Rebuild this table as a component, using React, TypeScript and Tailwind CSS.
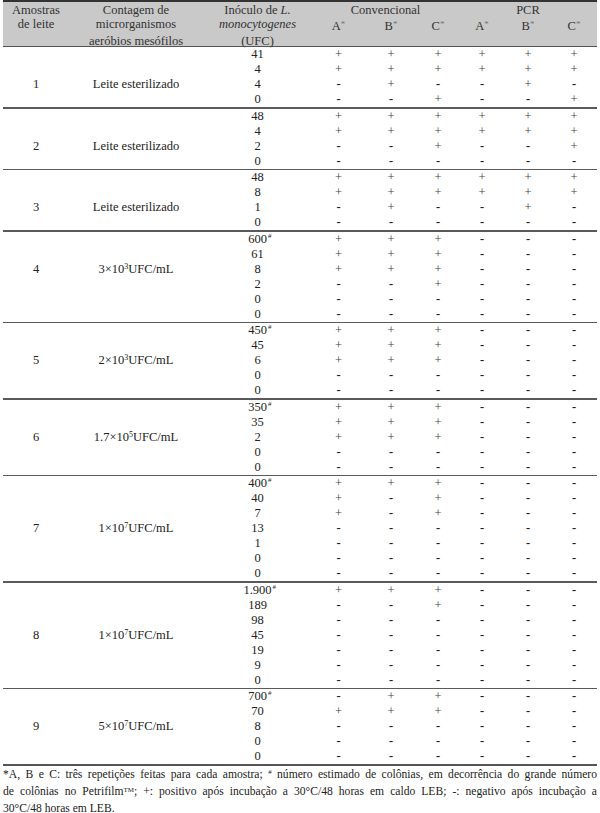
import React from 'react';

// grade de colunas: amostra | contagem | inóculo | convencional A B C | PCR A B C
const cols = 'grid grid-cols-[66px_134px_109px_53px_52px_42px_46px_46px_46px]';

type Row = [string, boolean, string];

interface Group {
    id: string;
    count: React.ReactNode;
    labelRow: number;
    rows: Row[];
}

const Pow = ({ base, exp }: { base: string; exp: string }) => (
    <span>
        {base}×10<span className="relative -top-[4px] text-[8px]">{exp}</span>UFC/mL
    </span>
);

const groups: Group[] = [
    {
        id: '1',
        count: 'Leite esterilizado',
        labelRow: 2,
        rows: [
            ['41', false, '++++++'],
            ['4', false, '++++++'],
            ['4', false, '-+--+-'],
            ['0', false, '--+--+'],
        ],
    },
    {
        id: '2',
        count: 'Leite esterilizado',
        labelRow: 2,
        rows: [
            ['48', false, '++++++'],
            ['4', false, '++++++'],
            ['2', false, '--+--+'],
            ['0', false, '------'],
        ],
    },
    {
        id: '3',
        count: 'Leite esterilizado',
        labelRow: 2,
        rows: [
            ['48', false, '++++++'],
            ['8', false, '++++++'],
            ['1', false, '-+--+-'],
            ['0', false, '------'],
        ],
    },
    {
        id: '4',
        count: <Pow base="3" exp="3" />,
        labelRow: 2,
        rows: [
            ['600', true, '+++---'],
            ['61', false, '+++---'],
            ['8', false, '+++---'],
            ['2', false, '--+---'],
            ['0', false, '------'],
            ['0', false, '------'],
        ],
    },
    {
        id: '5',
        count: <Pow base="2" exp="3" />,
        labelRow: 2,
        rows: [
            ['450', true, '+++---'],
            ['45', false, '+++---'],
            ['6', false, '+++---'],
            ['0', false, '------'],
            ['0', false, '------'],
        ],
    },
    {
        id: '6',
        count: <Pow base="1.7" exp="5" />,
        labelRow: 2,
        rows: [
            ['350', true, '+++---'],
            ['35', false, '+++---'],
            ['2', false, '+++---'],
            ['0', false, '------'],
            ['0', false, '------'],
        ],
    },
    {
        id: '7',
        count: <Pow base="1" exp="7" />,
        labelRow: 3,
        rows: [
            ['400', true, '+++---'],
            ['40', false, '+-+---'],
            ['7', false, '+-+---'],
            ['13', false, '------'],
            ['1', false, '------'],
            ['0', false, '------'],
            ['0', false, '------'],
        ],
    },
    {
        id: '8',
        count: <Pow base="1" exp="7" />,
        labelRow: 3,
        rows: [
            ['1.900', true, '+++---'],
            ['189', false, '--+---'],
            ['98', false, '------'],
            ['45', false, '------'],
            ['19', false, '------'],
            ['9', false, '------'],
            ['0', false, '------'],
        ],
    },
    {
        id: '9',
        count: <Pow base="5" exp="7" />,
        labelRow: 2,
        rows: [
            ['700', true, '-++---'],
            ['70', false, '+++---'],
            ['8', false, '------'],
            ['0', false, '------'],
            ['0', false, '------'],
        ],
    },
];

const Star = ({ letter }: { letter: string }) => (
    <span>
        {letter}
        <span className="relative -top-[3px] text-[9px] text-[#777]">*</span>
    </span>
);

export default function App() {
    return (
        <div className="w-[600px] h-[813px] bg-white px-[3px] text-[#222] font-['Liberation_Serif',serif] text-[12.5px] overflow-hidden">
            {/* cabeçalho */}
            <div className={`${cols} h-[47px] bg-[#c9c9c9] border-t-2 border-[#333] border-b-[1.5px] border-b-[#555] text-[#333] leading-[14px] pt-[1px] text-center`}>
                <div className="col-start-1 row-start-1">Amostras</div>
                <div className="col-start-1 row-start-2">de leite</div>

                <div className="col-start-2 row-start-1">Contagem de</div>
                <div className="col-start-2 row-start-2">microrganismos</div>
                <div className="col-start-2 row-start-3">aeróbios mesófilos</div>

                <div className="col-start-3 row-start-1">
                    Inóculo de <i>L.</i>
                </div>
                <div className="col-start-3 row-start-2 italic">monocytogenes</div>
                <div className="col-start-3 row-start-3">(UFC)</div>

                <div className="col-start-4 col-span-3 row-start-1">Convencional</div>
                <div className="col-start-7 col-span-3 row-start-1">PCR</div>

                {['A', 'B', 'C', 'A', 'B', 'C'].map((l, i) => (
                    <div key={i} className="row-start-2 pt-[2px]" style={{ gridColumnStart: i + 4 }}>
                        <Star letter={l} />
                    </div>
                ))}
            </div>

            {/* corpo */}
            {groups.map((g, gi) => (
                <div key={g.id}>
                    {gi > 0 && <div className="h-[1.5px] bg-[#5a5a5a]" />}
                    {g.rows.map(([value, hash, res], ri) => (
                        <div key={ri} className={`${cols} h-[15px] leading-[15px] text-center`}>
                            <div>{ri === g.labelRow ? g.id : ''}</div>
                            <div>{ri === g.labelRow ? g.count : ''}</div>
                            <div>
                                <span className="relative">
                                    {value}
                                    {hash && (
                                        <span className="absolute left-full top-[1px] text-[7px] leading-none pl-[1px]">#</span>
                                    )}
                                </span>
                            </div>
                            {res.split('').map((r, k) => (
                                <div key={k} className={r === '+' ? 'text-[#444]' : 'font-bold'}>
                                    {r === '+' ? '+' : '-'}
                                </div>
                            ))}
                        </div>
                    ))}
                </div>
            ))}
            <div className="h-[1.5px] bg-[#555]" />

            {/* nota de rodapé */}
            <div className="text-[11.6px] leading-[15px] pt-[1px] text-[#222]">
                <div className="text-justify [text-align-last:justify]">
                    *A, B e C: três repetições feitas para cada amostra;{' '}
                    <span className="relative -top-[4px] text-[7px]">#</span> número estimado de colônias, em decorrência do grande número
                </div>
                <div className="text-justify [text-align-last:justify]">
                    de colônias no Petrifilm<span className="relative -top-[3px] text-[7px]">TM</span>; +: positivo após incubação a 30°C/48 horas em caldo LEB; -: negativo após incubação a
                </div>
                <div>30°C/48 horas em LEB.</div>
            </div>
        </div>
    );
}
